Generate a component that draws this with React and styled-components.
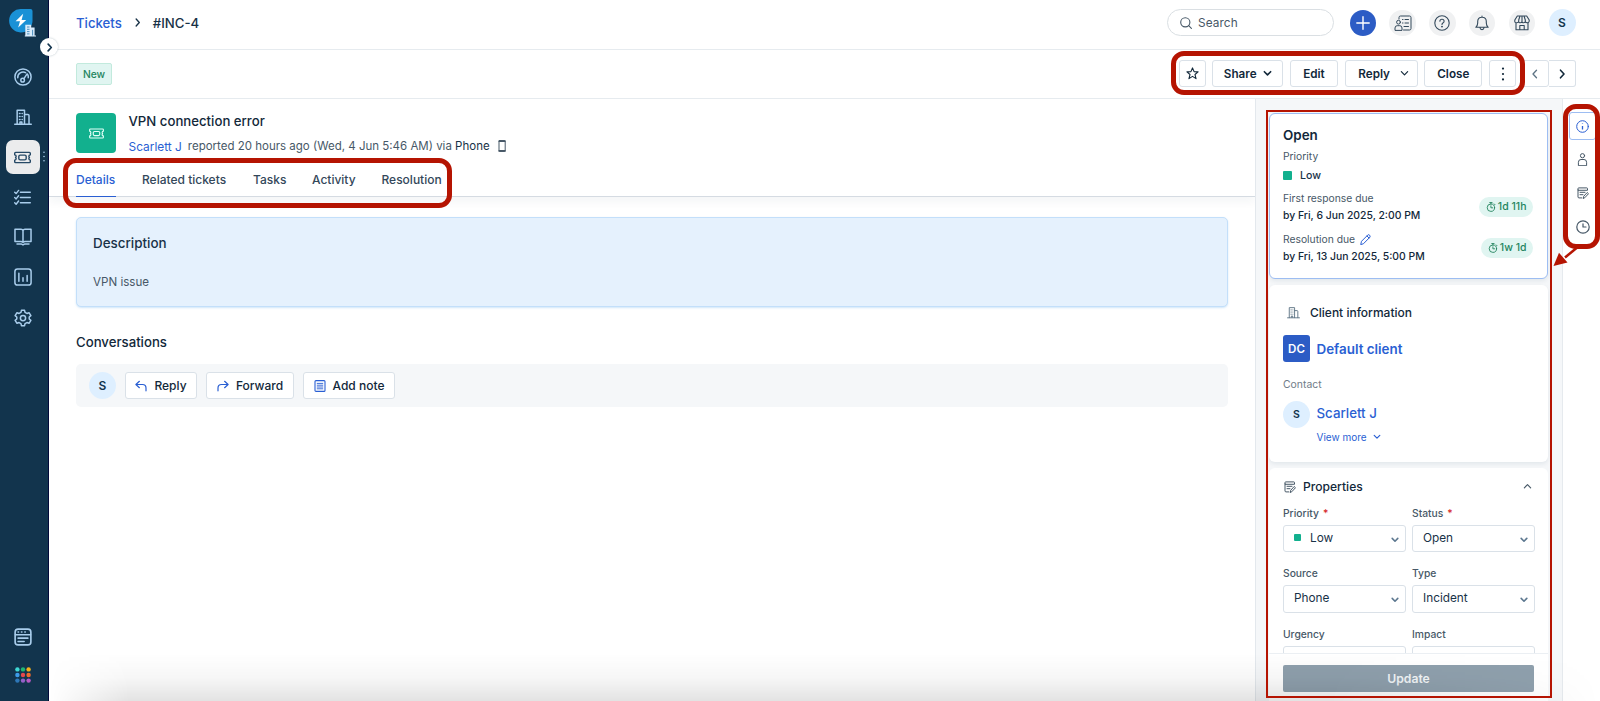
import React, { useState } from 'react';
import styled, { createGlobalStyle, css } from 'styled-components';

const GlobalStyle = createGlobalStyle`
  * {
    box-sizing: border-box;
  }
  body {
    margin: 0;
    overflow: hidden;
    font-family: Inter, 'Liberation Sans', sans-serif;
    color: #12344d;
  }
  button {
    font-family: inherit;
    margin: 0;
    padding: 0;
  }
  svg {
    display: block;
    flex: none;
  }
`;

// ---------------------------------------------------------- icons

function Icon({ w = 24, h, box = 24, sw = 1.6, children, ...rest }) {
  return (
    <svg
      width={w}
      height={h || w}
      viewBox={`0 0 ${box} ${box}`}
      fill="none"
      stroke="currentColor"
      strokeWidth={sw}
      strokeLinecap="round"
      strokeLinejoin="round"
      {...rest}
    >
      {children}
    </svg>
  );
}

const LogoIcon = () => (
  <svg width="28" height="28" viewBox="0 0 28 28">
    <path d="M12 0H21.500Q23.500 0 23.500 2V12A11.700 11.700 0 1 1 12 0Z" fill="#1a91d6" />
    <path d="M14.200 4.700 6.600 12.300H11L9.200 18.500 17.200 10.900H12.600Z" fill="#fff" />
    <path d="M16.300 26.500V15.800H22.200V18.500H25.600V26.500H27V27.500H15.800V26.500Z" fill="#d9ecfb" />
    <path d="M18 18H20.500M18 20.300H20.500M18 22.600H20.500M18 24.900H20.500M23.600 20.800V26.500" stroke="#3d84b8" strokeWidth=".9" />
  </svg>
);

const GaugeIcon = () => (
  <Icon w={18} sw={2}>
    <circle cx="12" cy="12" r="10.800" />
    <path d="M5 13A7.200 7.200 0 0 1 15.500 6.200M18.500 9.200A7 7 0 0 1 19 13M13.200 14.200 17.500 7.800" />
    <circle cx="11.500" cy="16.200" r="2.400" />
  </Icon>
);

const BuildingIcon = ({ w = 18, sw = 2 }) => (
  <Icon w={w} sw={sw}>
    <path d="M1 21.800H23M4.200 21.500V3H14V21.500M14 8.500H18.500Q20 8.500 20 10V21.500" />
    <path d="M7.300 7.200H8M10.800 7.200H11M7.300 11.200H8M10.800 11.200H11M7.300 15.200H8M10.800 15.200H11M8 21V18.500H10.500V21" />
  </Icon>
);

const TicketIcon = ({ w = 17, sw = 2 }) => (
  <Icon w={w} sw={sw}>
    <path d="M2.300 4.800H21.700Q23 4.800 23 6V8.200Q21 8.700 21 10.200 21 11.300 21.800 12 21 12.700 21 13.800 21 15.300 23 15.800V18Q23 19.200 21.700 19.200H2.300Q1 19.200 1 18V15.800Q3 15.300 3 13.800 3 12.700 2.200 12 3 11.300 3 10.200 3 8.700 1 8.200V6Q1 4.800 2.300 4.800Z" />
    <rect x="6.800" y="8.700" width="10.400" height="6.600" rx="2" />
  </Icon>
);

const TasksIcon = () => (
  <Icon w={17} sw={2}>
    <path d="M9 4.500H23M9 12H23M9 19.500H23" />
    <path d="M1 4.500 3 6.500 6.500 2M1 12 3 14 6.500 9.500M1 19.500 3 21.500 6.500 17" />
  </Icon>
);

const BookIcon = () => (
  <Icon w={18} sw={2}>
    <path d="M12 3.200Q11.500 1.800 9.500 1.800H1.300V18H9Q11.300 18 12 19.300 12.700 18 15 18H22.700V1.800H14.500Q12.500 1.800 12 3.200ZM12 3.200V19" />
    <path d="M4 21.200H9.500L12 22.500 14.500 21.200H20" />
  </Icon>
);

const ChartIcon = () => (
  <Icon w={18} sw={2}>
    <rect x="1.200" y="1.200" width="21.600" height="21.600" rx="3.500" />
    <path d="M6.500 17.500V7M12 17.500V13M17.500 17.500V10" />
  </Icon>
);

const GearIcon = () => (
  <Icon w={18} sw={2}>
    <path d="M9.300 4.500 9.900 1.800H14.100L14.700 4.500 17.200 5.900 20 4.900 22.500 8.800 20.300 10.700V13.300L22.500 15.200 20 19.100 17.200 18.100 14.700 19.500 14.100 22.200H9.900L9.300 19.500 6.800 18.100 4 19.100 1.500 15.200 3.700 13.300V10.700L1.500 8.800 4 4.900 6.800 5.900Z" />
    <circle cx="12" cy="12" r="3.500" />
  </Icon>
);

const WindowIcon = () => (
  <Icon w={18} sw={2.2}>
    <rect x="1.500" y="1.500" width="21" height="21" rx="4" />
    <path d="M2 9H22M5.500 5.300H6M10 5.300H10.500M14.500 5.300H15M5.500 13.500H18.500M5.500 18H13.500" />
  </Icon>
);

const GRID_COLORS = ['#3fd8d4', '#21b573', '#f6b21b', '#3d9be9', '#e5484d', '#ee6a2c', '#2e77b8', '#9461c9', '#b859c4'];

const AppsIcon = () => (
  <svg width="16" height="16" viewBox="0 0 16 16">
    {GRID_COLORS.map((c, i) => (
      <circle key={c} cx={2.4 + (i % 3) * 5.6} cy={2.4 + Math.floor(i / 3) * 5.6} r="2.200" fill={c} />
    ))}
  </svg>
);

const Chevron = ({ dir = 'down', w = 8, sw = 1.5 }) => {
  const paths = {
    down: 'M1.500 3 5 6.500 8.500 3',
    up: 'M1.500 6.500 5 3 8.500 6.500',
    right: 'M3.500 1.200 7 5 3.500 8.800',
    left: 'M6.500 1.200 3 5 6.500 8.800',
  };
  return (
    <Icon w={w} box={10} sw={sw}>
      <path d={paths[dir]} />
    </Icon>
  );
};

const SearchIcon = () => (
  <Icon w={12} box={12} sw={1.1}>
    <circle cx="5.300" cy="5.300" r="4.600" />
    <path d="M8.700 8.700 11.400 11.400" />
  </Icon>
);

const PlusIcon = () => (
  <Icon w={14} box={14} sw={1.4}>
    <path d="M7 .8V13.200M.8 7H13.200" />
  </Icon>
);

const ContactsIcon = () => (
  <Icon w={18} box={18} sw={1}>
    <path d="M5 5V3.500Q5 2 6.500 2H15.500Q17 2 17 3.500V14.500Q17 16 15.500 16H9.500M8.500 5.500H9M11 5.500H14.500M8.500 9H9M11 9H14.500M10 12.500H14.500" />
    <circle cx="4.500" cy="8.200" r="1.900" />
    <path d="M1 16V14Q1 11.700 3.200 11.700H5.800Q8 11.700 8 14V16Z" />
  </Icon>
);

const HelpIcon = () => (
  <Icon w={16} box={16} sw={1.1}>
    <circle cx="8" cy="8" r="7.200" />
    <path d="M5.900 6.300Q5.900 4.300 8 4.300T10.100 6.300Q10.100 7.400 8.900 8Q8 8.500 8 9.500" />
    <circle cx="8" cy="11.600" r=".4" fill="currentColor" />
  </Icon>
);

const BellIcon = () => (
  <Icon w={16} box={16} sw={1.1}>
    <path d="M1.800 12.300Q3.700 10.500 3.700 8V6.500Q3.700 2.200 8 2.200T12.300 6.500V8Q12.300 10.500 14.200 12.300ZM8 2V1M6 12.700Q6.200 14.600 8 14.600T10 12.700" />
  </Icon>
);

const StoreIcon = () => (
  <Icon w={16} box={16} sw={1.1}>
    <path d="M3.300 1H12.700L15.200 5V6.300Q15 7.800 13.300 7.800T11.300 6.300Q11.300 7.800 9.600 7.800T8 6.300Q8 7.800 6.300 7.800T4.700 6.300Q4.700 7.800 2.700 7.800T.8 6.300V5ZM4.700 6V5L6 1M8 6V1M11.300 6V5L10 1M2 8V14.800H14V8M5.800 14.500V10.500H10.200V14.500" />
  </Icon>
);

const StarIcon = () => (
  <Icon w={13} box={14} sw={1.2}>
    <path d="M7 1 8.700 5 13 5.300 9.700 8.100 10.800 12.500 7 10.100 3.200 12.500 4.300 8.100 1 5.300 5.300 5Z" />
  </Icon>
);

const DotsIcon = ({ h = 14, r = 1.1 }) => (
  <svg width="4" height={h} viewBox={`0 0 4 ${h}`} fill="currentColor">
    <circle cx="2" cy={r + 0.5} r={r} />
    <circle cx="2" cy={h / 2} r={r} />
    <circle cx="2" cy={h - r - 0.5} r={r} />
  </svg>
);

const PhoneIcon = () => (
  <Icon w={12} box={12} sw={1}>
    <rect x="3" y=".6" width="6.200" height="10.800" rx=".8" />
    <path d="M3.200 1.100H9M3.200 10.900H9" strokeWidth="1.700" />
  </Icon>
);

const ReplyIcon = () => (
  <Icon w={12} box={12} sw={1.2}>
    <path d="M4.400 1.300.9 4.500 4.400 7.700M1.200 4.500H7.500Q11 4.500 11 8V10.800" />
  </Icon>
);

const ForwardIcon = () => (
  <Icon w={12} box={12} sw={1.2}>
    <path d="M7.600 1.300 11.100 4.500 7.600 7.700M10.800 4.500H4.500Q1 4.500 1 8V10.800" />
  </Icon>
);

const NoteIcon = () => (
  <Icon w={12} box={12} sw={1.1}>
    <rect x="1" y=".6" width="10" height="10.800" rx="1" />
    <path d="M3.200 3.400H8.800M3.200 5.200H8.800M3.200 7H8.800M3.200 8.800H8.800" strokeWidth=".9" />
  </Icon>
);

const TimerIcon = () => (
  <Icon w={10} box={10} sw={0.9}>
    <circle cx="4.900" cy="5.700" r="3.700" />
    <path d="M3.700.6H6.100M4.900.6V2M4.900 3.800V5.800H6.700M8.200 1.900 9 2.700" />
  </Icon>
);

const PencilIcon = () => (
  <Icon w={11} box={11} sw={1}>
    <path d="M.8 10.200 1.500 7.300 7.900.9Q8.800.3 9.600 1.200T10 3.100L3.700 9.500ZM7 2 9 4" />
  </Icon>
);

const InfoIcon = () => (
  <Icon w={13} box={13} sw={1}>
    <circle cx="6.500" cy="6.500" r="5.800" />
    <path d="M6.500 5.900V9.500M6.500 3.500V3.900" strokeWidth="1.300" strokeLinecap="butt" />
  </Icon>
);

const PersonIcon = () => (
  <Icon w={13} box={13} sw={1}>
    <circle cx="6.500" cy="2.700" r="2.100" />
    <path d="M2.400 12.300V9.300Q2.400 6.500 5 6.500H8Q10.600 6.500 10.600 9.300V12.300Z" />
  </Icon>
);

const FormIcon = () => (
  <Icon w={12} box={12} sw={1}>
    <path d="M1 2.900V1.600Q1 .9 1.700.9H9.800Q10.500.9 10.500 1.600V2.900ZM1 2.900V9.900Q1 10.900 2 10.900H4.800M3 5.300H8M3 7.700H6" />
    <path d="M6.300 11.200 6.700 9.300 10.200 5.500 11.500 6.700 8 10.500Z" />
  </Icon>
);

const ClockIcon = () => (
  <Icon w={14} box={14} sw={1.2}>
    <circle cx="7" cy="7" r="6.200" />
    <path d="M7 3.800V7H10" />
  </Icon>
);

// ---------------------------------------------------------- data

const NAV = [
  { id: 'dashboard', icon: <GaugeIcon /> },
  { id: 'clients', icon: <BuildingIcon /> },
  { id: 'tickets', icon: <TicketIcon /> },
  { id: 'tasks', icon: <TasksIcon /> },
  { id: 'solutions', icon: <BookIcon /> },
  { id: 'reports', icon: <ChartIcon /> },
  { id: 'admin', icon: <GearIcon /> },
];

const TABS = [
  { name: 'Details', width: 40 },
  { name: 'Related tickets', width: 85 },
  { name: 'Tasks', width: 33 },
  { name: 'Activity', width: 43.5 },
  { name: 'Resolution', width: 61 },
];

const FIELDS = [
  { label: 'Priority', value: 'Low', required: true, dot: true },
  { label: 'Status', value: 'Open', required: true },
  { label: 'Source', value: 'Phone' },
  { label: 'Type', value: 'Incident' },
  { label: 'Urgency' },
  { label: 'Impact' },
];

// ---------------------------------------------------------- page

function App() {
  const [tab, setTab] = useState('Details');

  return (
    <>
      <GlobalStyle />
      <StPage>
        <StSidebar>
          <StLogo>
            <LogoIcon />
          </StLogo>
          <StNav>
            {NAV.map((item) => (
              <StNavItem key={item.id} $active={item.id === 'tickets'}>
                {item.icon}
                {item.id === 'tickets' && (
                  <StNavDots>
                    <DotsIcon h={11} r={0.8} />
                  </StNavDots>
                )}
              </StNavItem>
            ))}
          </StNav>
          <StNavBottom>
            <WindowIcon />
            <AppsIcon />
          </StNavBottom>
          <StToggle>
            <Chevron dir="right" w={9} sw={1.8} />
          </StToggle>
        </StSidebar>

        <StMain>
          <StHeader>
            <StCrumbs>
              <StCrumbLink>Tickets</StCrumbLink>
              <Chevron dir="right" w={9} sw={1.5} />
              <span>#INC-4</span>
            </StCrumbs>
            <StSearch>
              <SearchIcon />
              Search
            </StSearch>
            <StCircles>
              <StCircle $bg="#2c5cc5" $color="#fff">
                <PlusIcon />
              </StCircle>
              <StCircle>
                <ContactsIcon />
              </StCircle>
              <StCircle>
                <HelpIcon />
              </StCircle>
              <StCircle>
                <BellIcon />
              </StCircle>
              <StCircle>
                <StoreIcon />
              </StCircle>
              <StAvatar>S</StAvatar>
            </StCircles>
          </StHeader>

          <StToolbar>
            <StNewTag>New</StNewTag>
            <StActions>
              <StButton $w="27px">
                <StarIcon />
              </StButton>
              <StButton $w="71px" $gap="6px">
                Share
                <Chevron w={9} sw={1.8} />
              </StButton>
              <StButton $w="48px">Edit</StButton>
              <StButton $w="73px" $gap="10px" $push="5px">
                Reply
                <Chevron w={9} sw={1.3} />
              </StButton>
              <StButton $w="58px">Close</StButton>
              <StButton $w="27px">
                <DotsIcon />
              </StButton>
            </StActions>
            <StPager>
              <StPageArrow $dim>
                <Chevron dir="left" w={10} sw={1.3} />
              </StPageArrow>
              <StPageArrow>
                <Chevron dir="right" w={10} sw={1.6} />
              </StPageArrow>
            </StPager>
          </StToolbar>

          <StBody>
            <StTicket>
              <StTicketHead>
                <StTicketBox>
                  <TicketIcon w={15} sw={1.8} />
                </StTicketBox>
                <StTicketInfo>
                  <StTitle>VPN connection error</StTitle>
                  <StReported>
                    <StReporter>Scarlett J</StReporter>
                    <span>
                      reported 20 hours ago (Wed, 4 Jun 5:46 AM) via <StVia>Phone</StVia>
                    </span>
                    <PhoneIcon />
                  </StReported>
                </StTicketInfo>
              </StTicketHead>
              <StTabs>
                {TABS.map((item) => (
                  <StTab
                    key={item.name}
                    $w={item.width}
                    $active={item.name === tab}
                    onClick={() => {
                      setTab(item.name);
                    }}
                  >
                    {item.name}
                  </StTab>
                ))}
              </StTabs>
              <StContent>
                <StDescription>
                  <StDescTitle>Description</StDescTitle>
                  <StDescText>VPN issue</StDescText>
                </StDescription>
                <StConvTitle>Conversations</StConvTitle>
                <StConvBar>
                  <StAvatar>S</StAvatar>
                  <StConvButton $w="72px">
                    <ReplyIcon />
                    Reply
                  </StConvButton>
                  <StConvButton $w="88px">
                    <ForwardIcon />
                    Forward
                  </StConvButton>
                  <StConvButton $w="92px">
                    <NoteIcon />
                    Add note
                  </StConvButton>
                </StConvBar>
              </StContent>
            </StTicket>

            <StAside>
              <StStatusCard>
                <StStatus>Open</StStatus>
                <StLabel $h={23}>Priority</StLabel>
                <StPriority>
                  <StDot $size={9} />
                  Low
                </StPriority>
                <StDueRow $top={3}>
                  <div>
                    <StLabel $h={17}>First response due</StLabel>
                    <StDue>by Fri, 6 Jun 2025, 2:00 PM</StDue>
                  </div>
                  <StTimeTag>
                    <TimerIcon />
                    1d 11h
                  </StTimeTag>
                </StDueRow>
                <StDueRow $top={1}>
                  <div>
                    <StLabel $h={17}>
                      Resolution due
                      <PencilIcon />
                    </StLabel>
                    <StDue>by Fri, 13 Jun 2025, 5:00 PM</StDue>
                  </div>
                  <StTimeTag>
                    <TimerIcon />
                    1w 1d
                  </StTimeTag>
                </StDueRow>
              </StStatusCard>

              <StClientCard>
                <StCardHead>
                  <BuildingIcon w={13} sw={1.7} />
                  Client information
                </StCardHead>
                <StClientRow>
                  <StInitials>DC</StInitials>
                  <StClientName>Default client</StClientName>
                </StClientRow>
                <StContactLabel>Contact</StContactLabel>
                <StContactRow>
                  <StAvatar $small>S</StAvatar>
                  <div>
                    <StContactName>Scarlett J</StContactName>
                    <StViewMore>
                      View more
                      <Chevron w={8} sw={1.5} />
                    </StViewMore>
                  </div>
                </StContactRow>
              </StClientCard>

              <StPropsCard>
                <StPropsHead>
                  <FormIcon />
                  <span>Properties</span>
                  <Chevron dir="up" w={9} sw={1.3} />
                </StPropsHead>
                <StFields>
                  {FIELDS.map((f) => (
                    <div key={f.label}>
                      <StFieldLabel>
                        {f.label}
                        {f.required && <StStar>*</StStar>}
                      </StFieldLabel>
                      <StSelect>
                        {f.dot && <StDot $size={7} />}
                        {f.value && <span>{f.value}</span>}
                        <Chevron w={8} sw={2} />
                      </StSelect>
                    </div>
                  ))}
                </StFields>
              </StPropsCard>
              <StFooter>
                <StUpdate>Update</StUpdate>
              </StFooter>
            </StAside>

            <StRail>
              <StRailItem $active>
                <InfoIcon />
              </StRailItem>
              <StRailItem>
                <PersonIcon />
              </StRailItem>
              <StRailItem>
                <FormIcon />
              </StRailItem>
              <StRailItem>
                <ClockIcon />
              </StRailItem>
            </StRail>
          </StBody>
        </StMain>
        <StBottomShade />

        <StMark $x={1171} $y={51} $w={354} $h={44} />
        <StMark $x={63} $y={158} $w={389} $h={50} />
        <StMark $x={1563} $y={104} $w={37} $h={145} />
        <StMark $x={1266} $y={109.5} $w={286} $h={588} $thin />
        <StArrow width="30" height="26" viewBox="0 0 30 26">
          <path d="M26 2 12 13.500" stroke="#b51402" strokeWidth="2.500" />
          <path d="M.500 22 6 8.800 14.500 18.500Z" fill="#b51402" />
        </StArrow>
      </StPage>
    </>
  );
}

const StPage = styled.div`
  position: relative;
  display: flex;
  width: 1600px;
  height: 701px;
  background: #fff;
  overflow: hidden;
`;

const StSidebar = styled.div`
  position: relative;
  z-index: 2;
  display: flex;
  flex-direction: column;
  width: 49px;
  height: 701px;
  background: #12344d;
  border-right: 1px solid #02093a;
  color: #a9cdec;
`;

const StLogo = styled.div`
  padding: 9px 0 0 9px;
  height: 60px;
`;

const StNav = styled.div`
  display: flex;
  flex-direction: column;
  gap: 6.100px;
`;

const StNavItem = styled.div`
  position: relative;
  display: flex;
  align-items: center;
  justify-content: center;
  width: 34px;
  height: 34px;
  margin-left: 5.500px;
  border-radius: 7px;
  ${(props) =>
    props.$active &&
    css`
      background: #ebeced;
      color: #264966;
    `}
`;

const StNavDots = styled.div`
  position: absolute;
  left: 36.500px;
  top: 11px;
  color: #a9cdec;
`;

const StNavBottom = styled.div`
  display: flex;
  flex-direction: column;
  align-items: center;
  gap: 21px;
  margin-top: auto;
  padding: 0 3px 18px 0;
`;

const StToggle = styled.div`
  position: absolute;
  left: 40px;
  top: 38px;
  display: flex;
  align-items: center;
  justify-content: center;
  width: 18px;
  height: 18px;
  border-radius: 50%;
  background: #fff;
  color: #12344d;
  box-shadow: 0 0 2px rgba(18, 52, 77, 0.3);
`;

const StMain = styled.div`
  display: flex;
  flex-direction: column;
  width: 1551px;
`;

const StHeader = styled.div`
  display: flex;
  align-items: center;
  height: 50px;
  padding: 0 24.500px 3.500px 27px;
  border-bottom: 1px solid #e6ebef;
`;

const StCrumbs = styled.div`
  display: flex;
  align-items: center;
  gap: 11px;
  font-size: 13.200px;
  font-weight: 500;
  color: #183247;
  flex: 1;
`;

const StCrumbLink = styled.span`
  color: #2a5fd3;
`;

const StSearch = styled.div`
  display: flex;
  align-items: center;
  gap: 6px;
  width: 167px;
  height: 27px;
  padding-left: 12px;
  border: 1px solid #dadfe3;
  border-radius: 14px;
  font-size: 11.800px;
  letter-spacing: 0.1px;
  color: #475867;
`;

const StCircles = styled.div`
  display: flex;
  align-items: center;
  gap: 13.300px;
  margin-left: 15.500px;
`;

const StCircle = styled.div`
  display: flex;
  align-items: center;
  justify-content: center;
  width: 26.500px;
  height: 26.500px;
  border-radius: 50%;
  background: ${(props) => props.$bg || '#f0f1f2'};
  color: ${(props) => props.$color || '#33495b'};
`;

const StAvatar = styled.div`
  display: flex;
  flex: none;
  align-items: center;
  justify-content: center;
  width: 27px;
  height: 27px;
  border-radius: 50%;
  background: #deefff;
  color: #12344d;
  font-size: ${(props) => (props.$small ? '10.500px' : '12px')};
  font-weight: 600;
`;

const StToolbar = styled.div`
  display: flex;
  align-items: center;
  height: 49px;
  padding: 0 24.500px 1px 27px;
  border-bottom: 1px solid #e6ebef;
`;

const StNewTag = styled.div`
  display: flex;
  align-items: center;
  justify-content: center;
  width: 36px;
  height: 22px;
  border: 1px solid #c2eadd;
  border-radius: 2px;
  background: #e0f5f1;
  color: #24855f;
  font-size: 10.300px;
  font-weight: 500;
`;

const StActions = styled.div`
  display: flex;
  gap: 6.700px;
  margin-left: auto;
`;

const StButton = styled.button`
  display: flex;
  align-items: center;
  justify-content: center;
  gap: ${(props) => props.$gap || '0'};
  width: ${(props) => props.$w};
  height: 27px;
  padding-left: ${(props) => props.$push || '0'};
  border: 1px solid #dae1e8;
  border-radius: 3px;
  background: #fff;
  color: #12283a;
  font-size: 11.700px;
  font-weight: 600;
`;

const StPager = styled.div`
  display: flex;
  width: 54px;
  margin-left: 5.500px;
`;

const StPageArrow = styled.button`
  display: flex;
  align-items: center;
  justify-content: center;
  width: 27px;
  height: 27px;
  border: 1px solid #dae1e8;
  border-radius: 0 3px 3px 0;
  background: #fff;
  color: ${(props) => (props.$dim ? '#5d7384' : '#12283a')};
  & + & {
    border-left: 0;
  }
`;

const StBody = styled.div`
  display: flex;
  height: 602px;
`;

const StTicket = styled.div`
  width: 1206px;
`;

const StTicketHead = styled.div`
  display: flex;
  height: 66px;
  padding: 14px 0 0 27px;
`;

const StTicketBox = styled.div`
  display: flex;
  align-items: center;
  justify-content: center;
  width: 40px;
  height: 40px;
  border-radius: 4px;
  background: #12b08e;
  color: #e2fff7;
`;

const StTicketInfo = styled.div`
  margin-left: 12.500px;
`;

const StTitle = styled.div`
  height: 16px;
  line-height: 16px;
  font-size: 13.200px;
  font-weight: 500;
  color: #12283a;
`;

const StReported = styled.div`
  display: flex;
  align-items: center;
  gap: 6px;
  margin-top: 9px;
  height: 16px;
  font-size: 11.500px;
  line-height: 16px;
  color: #475867;
`;

const StReporter = styled.span`
  margin-top: 2px;
  font-size: 11.900px;
  color: #2a5fd3;
`;

const StVia = styled.span`
  color: #183247;
`;

const StTabs = styled.div`
  display: flex;
  gap: 26px;
  height: 32px;
  padding-left: 27px;
  border-bottom: 1px solid #d5dbe2;
  box-shadow: 0 6px 8px rgba(18, 52, 77, 0.04);
`;

const StTab = styled.div`
  width: ${(props) => props.$w}px;
  height: 32px;
  line-height: 30px;
  white-space: nowrap;
  font-size: 12px;
  font-weight: 500;
  color: ${(props) => (props.$active ? '#2a5fd3' : '#33475a')};
  cursor: pointer;
  ${(props) =>
    props.$active &&
    css`
      border-bottom: 1.500px solid #2a5fd3;
    `}
`;

const StContent = styled.div`
  padding: 20px 27px 0;
`;

const StDescription = styled.div`
  height: 90px;
  padding: 16px 16px 0;
  border: 1px solid #c3dffa;
  border-radius: 5px;
  background: #e5f1fd;
  box-shadow: 0 1px 2px rgba(160, 205, 245, 0.5);
`;

const StDescTitle = styled.div`
  line-height: 18px;
  font-size: 13.400px;
  font-weight: 500;
  color: #183247;
`;

const StDescText = styled.div`
  margin-top: 21px;
  line-height: 18px;
  font-size: 11.600px;
  color: #475867;
`;

const StConvTitle = styled.div`
  margin-top: 25px;
  line-height: 20px;
  font-size: 13.200px;
  font-weight: 500;
  color: #12283a;
`;

const StConvBar = styled.div`
  display: flex;
  align-items: center;
  gap: 9px;
  height: 43px;
  margin-top: 12px;
  padding-left: 13px;
  border-radius: 5px;
  background: #f5f7f9;
`;

const StConvButton = styled(StButton)`
  gap: 7px;
  font-size: 12px;
  font-weight: 500;
  svg {
    color: #2a5fd3;
  }
`;

const StAside = styled.div`
  display: flex;
  flex-direction: column;
  width: 308px;
  padding: 14px 14px 0 13px;
  border-left: 1px solid #e3e8ed;
  border-right: 1px solid #e6eaee;
  background: #f5f7f9;
`;

const StCard = styled.div`
  flex: none;
  padding: 0 14px;
  border-radius: 6px;
  background: #fff;
  box-shadow: 0 2px 4px rgba(18, 52, 77, 0.08);
`;

const StStatusCard = styled(StCard)`
  height: 166px;
  padding: 11.500px 14px 0 13px;
  border: 1px solid #9dbdf2;
`;

const StStatus = styled.div`
  line-height: 19px;
  font-size: 13.400px;
  font-weight: 600;
  color: #12283a;
`;

const StLabel = styled.div`
  display: flex;
  align-items: center;
  gap: 5px;
  height: ${(props) => props.$h}px;
  font-size: 10.300px;
  color: #475867;
  svg {
    color: #2a5fd3;
  }
`;

const StPriority = styled.div`
  display: flex;
  align-items: center;
  gap: 8px;
  height: 16px;
  font-size: 10.600px;
  font-weight: 500;
  color: #183247;
`;

const StDot = styled.span`
  flex: none;
  width: ${(props) => props.$size}px;
  height: ${(props) => props.$size}px;
  border-radius: 1px;
  background: #12b08e;
`;

const StDueRow = styled.div`
  display: flex;
  justify-content: space-between;
  align-items: center;
  height: 40px;
  margin-top: ${(props) => props.$top}px;
`;

const StDue = styled.div`
  line-height: 17px;
  font-size: 10.400px;
  font-weight: 500;
  color: #12283a;
`;

const StTimeTag = styled.div`
  display: flex;
  align-items: center;
  gap: 2px;
  height: 20px;
  padding: 0 6.500px 0 7px;
  border-radius: 10px;
  background: #e0f5f1;
  color: #24855f;
  font-size: 10.500px;
  font-weight: 500;
`;

const StClientCard = styled(StCard)`
  height: 177px;
  margin-top: 6px;
  padding-top: 17px;
`;

const StCardHead = styled.div`
  display: flex;
  align-items: center;
  gap: 10px;
  height: 20px;
  padding-left: 4px;
  font-size: 12px;
  font-weight: 500;
  color: #12283a;
  svg {
    color: #5d7384;
  }
`;

const StClientRow = styled.div`
  display: flex;
  align-items: center;
  gap: 6.500px;
  margin-top: 13px;
  height: 27px;
`;

const StInitials = styled.div`
  display: flex;
  align-items: center;
  justify-content: center;
  width: 27px;
  height: 27px;
  border-radius: 3px;
  background: #2c5cc5;
  color: #fff;
  font-size: 11.500px;
  font-weight: 600;
`;

const StClientName = styled.span`
  font-size: 13.400px;
  font-weight: 600;
  color: #2a5fd3;
`;

const StContactLabel = styled.div`
  margin-top: 14.500px;
  line-height: 16px;
  font-size: 10.400px;
  color: #6f7c87;
`;

const StContactRow = styled.div`
  display: flex;
  gap: 6.500px;
  margin-top: 8px;
`;

const StContactName = styled.div`
  line-height: 25px;
  font-size: 13.300px;
  font-weight: 500;
  color: #2a5fd3;
`;

const StViewMore = styled.div`
  display: flex;
  align-items: center;
  gap: 6px;
  height: 22px;
  font-size: 10px;
  color: #2a5fd3;
`;

const StPropsCard = styled(StCard)`
  height: 185px;
  margin-top: 6px;
  padding-top: 8.500px;
  overflow: hidden;
  border-radius: 6px 6px 0 0;
  box-shadow: none;
`;

const StPropsHead = styled.div`
  display: flex;
  align-items: center;
  gap: 7px;
  height: 20px;
  padding: 0 2px 0 1px;
  font-size: 12.100px;
  font-weight: 500;
  color: #12283a;
  svg {
    color: #475867;
  }
  svg:last-child {
    margin-left: auto;
  }
`;

const StFields = styled.div`
  display: grid;
  grid-template-columns: 122.500px 122.500px;
  column-gap: 6.500px;
  row-gap: 13px;
  margin-top: 8.500px;
`;

const StFieldLabel = styled.div`
  display: flex;
  gap: 4px;
  height: 20px;
  line-height: 17px;
  font-size: 10.300px;
  font-weight: 500;
  color: #475867;
`;

const StStar = styled.span`
  color: #d72d30;
`;

const StSelect = styled.div`
  display: flex;
  align-items: center;
  height: 27.300px;
  padding: 0 6px 2px 10px;
  border: 1px solid #dae1e8;
  border-radius: 3px;
  font-size: 11.800px;
  color: #183247;
  svg {
    margin: 4px 0 0 auto;
    color: #5d7890;
  }
  ${StDot} {
    margin-right: 9px;
  }
`;

const StFooter = styled.div`
  flex: 1;
  padding: 11px 15px 0 14px;
  border-top: 1px solid #ebeff3;
  background: #fff;
`;

const StUpdate = styled.button`
  width: 251px;
  height: 27px;
  border: 0;
  border-radius: 2px;
  background: #8fa0ad;
  color: #f1f4f6;
  font-size: 12.200px;
  font-weight: 600;
`;

const StRail = styled.div`
  display: flex;
  flex-direction: column;
  align-items: center;
  gap: 5.500px;
  width: 37px;
  padding-top: 13px;
`;

const StRailItem = styled.div`
  display: flex;
  align-items: center;
  justify-content: center;
  width: 27px;
  height: 28px;
  margin-left: 2px;
  border: 1px solid ${(props) => (props.$active ? '#9dbdf2' : 'transparent')};
  border-radius: 3px;
  color: ${(props) => (props.$active ? '#2a5fd3' : '#475867')};
`;

const StBottomShade = styled.div`
  position: absolute;
  left: 49px;
  right: 0;
  bottom: 0;
  height: 48px;
  background: linear-gradient(to bottom, rgba(0, 0, 0, 0), rgba(0, 0, 0, 0.03) 50%, rgba(0, 0, 0, 0.11));
  mask-image: linear-gradient(to right, transparent, #000 80px, #000 1280px, transparent);
  pointer-events: none;
`;

// red callouts drawn over the page
const StMark = styled.div`
  position: absolute;
  z-index: 3;
  left: ${(props) => props.$x}px;
  top: ${(props) => props.$y}px;
  width: ${(props) => props.$w}px;
  height: ${(props) => props.$h}px;
  border: ${(props) => (props.$thin ? '2px' : '5px')} solid #b51402;
  border-radius: ${(props) => (props.$thin ? '0' : '13px')};
  pointer-events: none;
`;

const StArrow = styled.svg`
  position: absolute;
  z-index: 3;
  left: 1553px;
  top: 244px;
`;

export default App;
